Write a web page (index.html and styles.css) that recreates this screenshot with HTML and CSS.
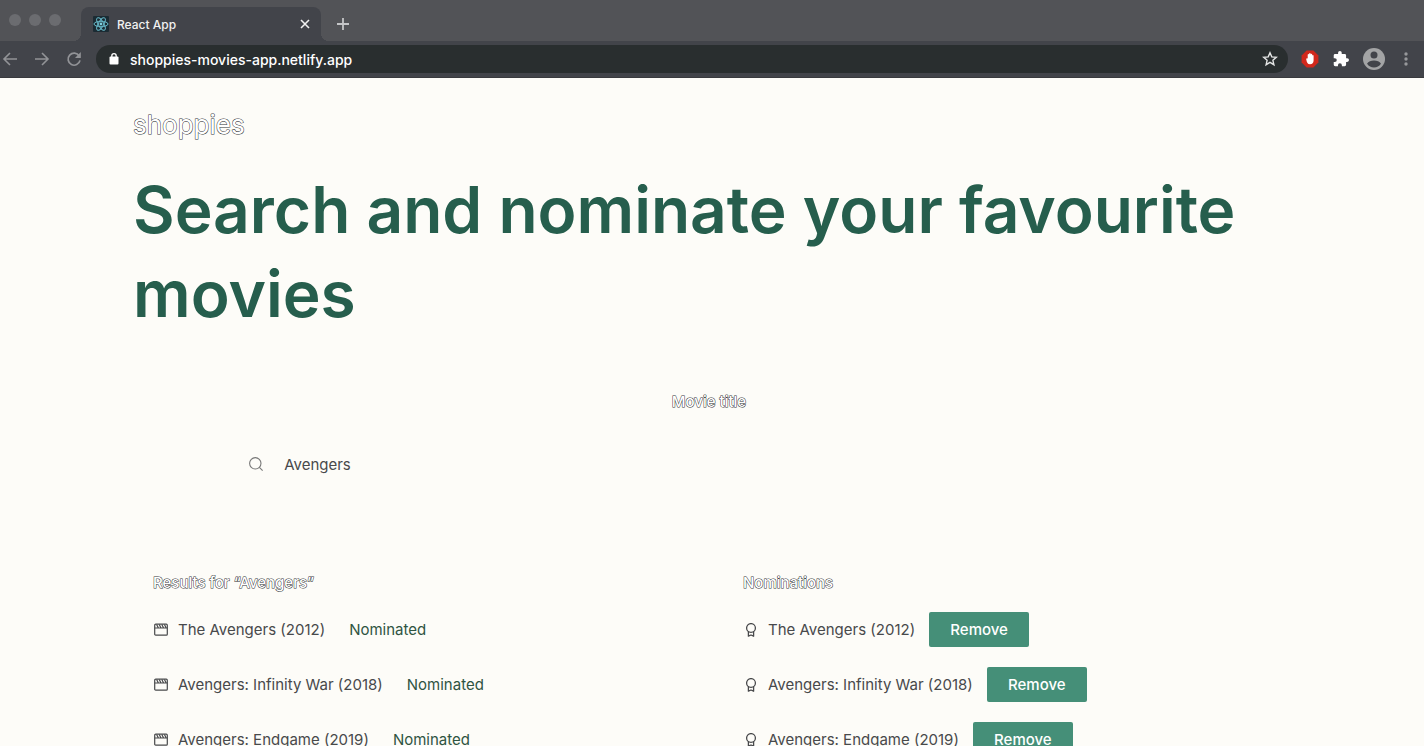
FILE: index.html
```html
<!DOCTYPE html>
<html lang="en">
<head>
<meta charset="utf-8">
<meta name="viewport" content="width=device-width, initial-scale=1">
<title>React App</title>
<link rel="stylesheet" href="styles.css">
</head>
<body>
<svg class="sprite" aria-hidden="true">
  <symbol id="clapper" viewBox="0 0 14 14"><g fill="none" stroke="currentColor" stroke-width="1.2"><rect x=".7" y="1.2" width="12.6" height="11" rx="1"/><path d="M.7 5h12.6M2.600 1.400l1.700 3.400M5.200 1.400l1.700 3.400M7.800 1.400l1.700 3.400M10.400 1.400l1.700 3.400"/></g></symbol>
  <symbol id="award" viewBox="0 0 14 14"><g fill="none" stroke="currentColor" stroke-width="1.3" stroke-linejoin="round"><circle cx="7" cy="5" r="4.400"/><path d="M4.400 8.600v4.600L7 12l2.600 1.200V8.600"/></g></symbol>
</svg>
<header class="browser">
  <div class="tabstrip">
    <div class="lights"><i></i><i></i><i></i></div>
    <div class="tab">
      <svg class="favicon" viewBox="0 0 16 16"><rect width="16" height="16" rx="1" fill="#1b2b33"/><g fill="none" stroke="#68b9c9" stroke-width="1"><ellipse cx="8" cy="8" rx="7" ry="2.7"/><ellipse cx="8" cy="8" rx="7" ry="2.7" transform="rotate(60 8 8)"/><ellipse cx="8" cy="8" rx="7" ry="2.7" transform="rotate(120 8 8)"/></g><circle cx="8" cy="8" r="1.4" fill="#7fd0de"/></svg>
      <span class="tab-title">React App</span>
      <button class="chrome-btn" aria-label="Close tab"><svg width="10" height="10" viewBox="0 0 10 10"><path d="M1 1l8 8M9 1l-8 8" stroke="#f1f1f1" stroke-width="1.6"/></svg></button>
    </div>
    <button class="chrome-btn new-tab" aria-label="New tab"><svg width="12" height="12" viewBox="0 0 12 12"><path d="M6 0v12M0 6h12" stroke="#c4c5c7" stroke-width="1.8"/></svg></button>
  </div>
  <div class="toolbar">
    <nav class="nav">
      <button class="chrome-btn" aria-label="Back"><svg width="16" height="16" viewBox="0 0 16 16"><path d="M15 8H2M8 2L2 8l6 6" fill="none" stroke="#929397" stroke-width="1.6"/></svg></button>
      <button class="chrome-btn" aria-label="Forward"><svg width="16" height="16" viewBox="0 0 16 16"><path d="M1 8h13M8 2l6 6-6 6" fill="none" stroke="#929397" stroke-width="1.6"/></svg></button>
      <button class="chrome-btn" aria-label="Reload"><svg width="16" height="16" viewBox="0 0 16 16"><path d="M13.2 5A6 6 0 1 0 14 9.4" fill="none" stroke="#929397" stroke-width="1.7"/><path d="M14.8 1v6H9z" fill="#929397"/></svg></button>
    </nav>
    <div class="address">
      <svg width="10" height="12" viewBox="0 0 10 12"><rect x=".5" y="3.6" width="9" height="7.8" rx="1" fill="#fff"/><path d="M2.8 4V2.9a2.2 2.2 0 0 1 4.4 0V4" fill="none" stroke="#fff" stroke-width="1.3"/></svg>
      <input class="url" aria-label="Address" value="shoppies-movies-app.netlify.app">
      <button class="chrome-btn" aria-label="Bookmark"><svg width="16" height="16" viewBox="0 0 16 16"><path d="M8 1.8l1.8 4.1 4.5.4-3.4 3 1 4.4L8 11.4l-3.9 2.3 1-4.4-3.4-3 4.5-.4z" fill="none" stroke="#e4e5e5" stroke-width="1.4"/></svg></button>
    </div>
    <div class="extensions">
      <button class="chrome-btn" aria-label="Ad blocker"><svg width="18" height="18" viewBox="0 0 18 18"><path d="M5.6.6h6.800l5 5v6.800l-5 5H5.600l-5-5V5.600z" fill="#d1281c"/><path d="M5.200 9.200c0-1.200 1.200-1.200 1.500-.5V4.800c.1-1 1.300-1 1.400-.2v-.7c.1-1.100 1.500-1.100 1.600 0v.7c.1-1 1.400-1 1.500 0v1c.2-.9 1.400-.8 1.400.2v4.400c0 2.600-1.300 4.100-3.600 4.100-2.500 0-3.100-1.800-3.800-5.100z" fill="#fff"/></svg></button>
      <button class="chrome-btn" aria-label="Extensions"><svg width="16" height="16" viewBox="1 1 22 22"><path d="M20.500 11H19V7a2 2 0 0 0-2-2h-4V3.500a2.500 2.500 0 0 0-5 0V5H4a2 2 0 0 0-2 2v3.800h1.500a2.700 2.700 0 0 1 0 5.400H2V20a2 2 0 0 0 2 2h3.800v-1.500a2.700 2.700 0 0 1 5.400 0V22H17a2 2 0 0 0 2-2v-4h1.500a2.500 2.500 0 0 0 0-5z" fill="#fff"/></svg></button>
      <button class="chrome-btn" aria-label="Profile"><svg width="22" height="22" viewBox="0 0 22 22"><circle cx="11" cy="11" r="11" fill="#a3a4a5"/><circle cx="11" cy="7" r="3.500" fill="#42444a"/><path d="M4 15.800c1.400-2.300 4-3.300 7-3.300s5.600 1 7 3.300a8.500 8.500 0 0 1-14 0z" fill="#42444a"/></svg></button>
      <button class="chrome-btn menu" aria-label="Menu"><svg width="4" height="14" viewBox="0 0 4 14"><g fill="#97989b"><circle cx="2" cy="2" r="1.700"/><circle cx="2" cy="7" r="1.700"/><circle cx="2" cy="12" r="1.700"/></g></svg></button>
    </div>
  </div>
</header>
<main class="page">
  <div class="logo outlined">shoppies</div>
  <h1 class="headline">Search and nominate your favourite movies</h1>
  <form class="search">
    <label class="label outlined" for="movie">Movie title</label>
    <div class="field">
      <svg width="14" height="14" viewBox="0 0 14 14"><g fill="none" stroke="#777" stroke-width="1.100"><circle cx="6.300" cy="6.300" r="5.700"/><path d="M10.400 10.400l3.200 3.200"/></g></svg>
      <input id="movie" class="query" value="Avengers">
    </div>
  </form>
  <div class="columns">
    <section>
      <h2 class="label outlined">Results for “Avengers”</h2>
      <ul class="list">
        <li class="item"><svg class="icon"><use href="#clapper"/></svg><span>The Avengers (2012)</span><span class="status">Nominated</span></li>
        <li class="item"><svg class="icon"><use href="#clapper"/></svg><span>Avengers: Infinity War (2018)</span><span class="status">Nominated</span></li>
        <li class="item"><svg class="icon"><use href="#clapper"/></svg><span>Avengers: Endgame (2019)</span><span class="status">Nominated</span></li>
      </ul>
    </section>
    <section>
      <h2 class="label outlined">Nominations</h2>
      <ul class="list">
        <li class="item"><svg class="icon"><use href="#award"/></svg><span>The Avengers (2012)</span><button class="remove">Remove</button></li>
        <li class="item"><svg class="icon"><use href="#award"/></svg><span>Avengers: Infinity War (2018)</span><button class="remove">Remove</button></li>
        <li class="item"><svg class="icon"><use href="#award"/></svg><span>Avengers: Endgame (2019)</span><button class="remove">Remove</button></li>
      </ul>
    </section>
  </div>
</main>
</body>
</html>
```
FILE: styles.css
```css
* { box-sizing: border-box; }
html { background: #2b2c2e; }
body {
  margin: 0;
  height: 100vh;
  overflow: hidden;
  background: #fdfcf8;
  color: #48494b;
  font-family: Inter, "Liberation Sans", sans-serif;
  font-size: 15px;
}
button, input { font: inherit; border: 0; padding: 0; background: none; outline: 0; }
.sprite { display: none; }
.chrome-btn { display: grid; place-items: center; }

.browser { color: #f1f1f1; }
.tabstrip {
  display: flex;
  align-items: flex-end;
  height: 41px;
  background: #525357;
}
.lights { display: flex; gap: 8px; align-self: flex-start; padding: 14px 20px 0 9px; }
.lights i { width: 12px; height: 12px; border-radius: 50%; background: #6b6c70; }
.tab {
  position: relative;
  display: flex;
  align-items: center;
  width: 240px;
  height: 34px;
  padding: 0 11px 0 12px;
  border-radius: 8px 8px 0 0;
  background: #42444a;
  font-size: 12px;
  font-weight: 500;
}
.tab::before, .tab::after {
  content: "";
  position: absolute;
  bottom: 0;
  width: 8px;
  height: 8px;
}
.tab::before { right: 100%; background: radial-gradient(circle at 0 0, transparent 8px, #42444a 8px); }
.tab::after { left: 100%; background: radial-gradient(circle at 100% 0, transparent 8px, #42444a 8px); }
.favicon { width: 16px; height: 16px; margin-right: 8px; }
.tab-title { flex: 1; }
.new-tab { height: 34px; margin-left: 16px; }
.toolbar {
  display: flex;
  align-items: center;
  height: 37px;
  padding-right: 16px;
  background: #42444a;
  border-bottom: 1px solid #393a3e;
}
.nav { display: flex; gap: 16px; padding: 0 14px 0 2px; }
.address {
  display: flex;
  flex: 1;
  align-items: center;
  height: 28px;
  padding: 0 10px 0 13px;
  border-radius: 14px;
  background: #292e2f;
}
.url { flex: 1; margin-left: 11px; color: #fff; font-size: 14px; font-weight: 500; }
.extensions { display: flex; align-items: center; gap: 14px; padding-left: 13px; }
.menu { margin-left: 5px; }

.page { padding: 31px 139px 0 133px; }
.outlined { color: #fff; -webkit-text-stroke: 1px #333538; paint-order: stroke fill; }
.logo { font-size: 26px; line-height: 32px; }
.headline {
  margin: 27px 0 0;
  color: #265e4d;
  font-size: 64px;
  font-weight: 600;
  line-height: 84px;
}
.search { display: flex; flex-direction: column; margin-top: 56px; }
.label { margin: 0; font-size: 15px; font-weight: 500; line-height: 20px; }
.search .label { align-self: center; }
.field {
  display: flex;
  align-items: center;
  gap: 21px;
  height: 48px;
  margin: 28px 10% 0;
  padding-left: 1px;
}
.query { flex: 1; color: #48494b; }
.columns {
  display: grid;
  grid-template-columns: 1fr 1fr;
  gap: 48px;
  padding: 85px 0 0 20px;
}
.list { display: grid; gap: 20px; margin: 19px 0 0; padding: 0; list-style: none; }
.item { display: flex; align-items: center; height: 35px; padding-left: 1px; white-space: nowrap; }
.icon { width: 14px; height: 14px; margin-right: 10px; }
.status { margin-left: 24px; color: #2f5442; }
.remove {
  width: 100px;
  height: 35px;
  margin-left: 14px;
  border-radius: 2px;
  background: #458f78;
  color: #fff;
  font-weight: 500;
}
```
